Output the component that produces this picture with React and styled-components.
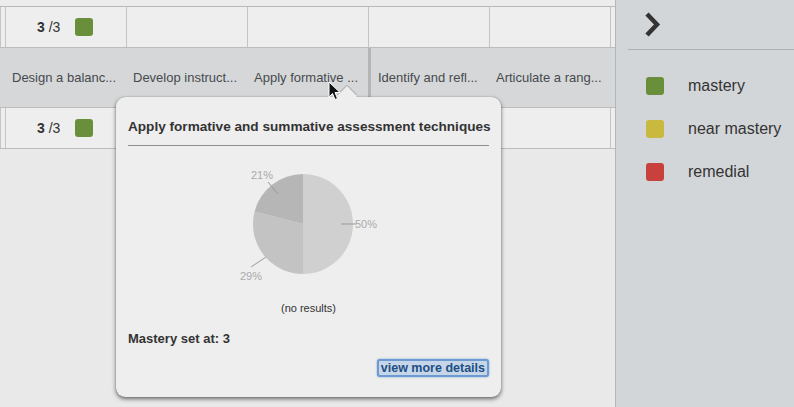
import React from "react";
import styled, { createGlobalStyle } from "styled-components";

const GlobalStyle = createGlobalStyle`
  html, body {
    margin: 0;
    padding: 0;
    background: #e9e9e9;
    font-family: "Liberation Sans", Arial, sans-serif;
  }
`;

const Page = styled.div`
  display: flex;
  width: 794px;
  height: 407px;
  overflow: hidden;
  position: relative;
`;

const Main = styled.div`
  width: 615px;
  flex: none;
  background: #e9e9e9;
`;

const TopStrip = styled.div`
  height: 6px;
  background: #ececec;
  border-bottom: 1px solid #b9b9b9;
`;

const Row = styled.div`
  display: grid;
  grid-template-columns: 5px repeat(5, 121px) 1fr;
  height: ${(p) => p.h}px;
  background: ${(p) => (p.header ? "#d5d7d9" : "#eeeeee")};
  border-bottom: 1px solid #bdbdbd;
`;

const Cell = styled.div`
  display: flex;
  align-items: center;
  justify-content: flex-start;
  gap: 15px;
  border-left: ${(p) => (p.header ? "none" : "1px solid #c4c4c4")};
  ${(p) => p.divider && "border-left: 3px solid #b3b5b7;"}
  padding-left: ${(p) => (p.header ? "7px" : "0")};
  font-size: 13px;
  color: #474a4d;
  white-space: nowrap;
  overflow: hidden;
`;

const Score = styled.span`
  font-size: 14px;
  color: #333;
  padding-left: 31px;
  b {
    font-weight: bold;
  }
`;

const Swatch = styled.span`
  display: inline-block;
  width: 18px;
  height: 18px;
  border-radius: 3px;
  background: ${(p) => p.color};
  flex: none;
`;

const Side = styled.div`
  flex: 1;
  background: #d3d6d9;
  border-left: 1px solid #b4b6b8;
  padding-left: 12px;
`;

const SideHead = styled.div`
  height: 50px;
  border-bottom: 1px solid #aeb0b2;
  display: flex;
  align-items: center;
  padding-left: 16px;
  box-sizing: border-box;
`;

const Legend = styled.div`
  display: flex;
  flex-direction: column;
  gap: 25px;
  padding: 27px 0 0 18px;
`;

const LegendItem = styled.div`
  display: flex;
  align-items: center;
  gap: 24px;
  font-size: 16px;
  color: #333;
`;

const Pop = styled.div`
  position: absolute;
  left: 116px;
  top: 97px;
  width: 385px;
  height: 300px;
  box-sizing: border-box;
  background: #eeeeee;
  border-radius: 9px;
  box-shadow: 0 2px 4px rgba(0, 0, 0, 0.55), 0 0 1px rgba(0, 0, 0, 0.4);
  padding: 22px 12px 0 12px;
  display: flex;
  flex-direction: column;
`;

const Arrow = styled.div`
  position: absolute;
  left: 224px;
  top: -8px;
  width: 14px;
  height: 14px;
  background: #eeeeee;
  transform: rotate(45deg);
  box-shadow: -1px -1px 1px rgba(0, 0, 0, 0.2);
`;

const PopTitle = styled.div`
  font-size: 13.6px;
  font-weight: bold;
  color: #333;
  white-space: nowrap;
  padding-bottom: 11px;
  border-bottom: 1px solid #8f8f8f;
`;

const Chart = styled.div`
  display: flex;
  justify-content: center;
  margin-top: 21px;
  padding-left: 3px;
`;

const NoResults = styled.div`
  text-align: center;
  font-size: 11px;
  color: #333;
  margin-top: 20px;
`;

const MasterySet = styled.div`
  font-size: 13px;
  font-weight: bold;
  color: #333;
  margin-top: 17px;
`;

const Footer = styled.div`
  display: flex;
  justify-content: flex-end;
  margin-top: 13px;
`;

const DetailsBtn = styled.a`
  font-size: 12.5px;
  font-weight: bold;
  color: #1d4f86;
  padding: 0 2px;
  border: 2px solid #6c9bd2;
  border-radius: 3px;
  background: #c6d6e8;
  box-shadow: 0 0 2px #6c9bd2;
  cursor: pointer;
`;

const Cursor = styled.svg`
  position: absolute;
  left: 328px;
  top: 81px;
`;

const labels = [
  "Design a balanc...",
  "Develop instruct...",
  "Apply formative ...",
  "Identify and refl...",
  "Articulate a rang...",
];

function ScoreRow() {
  return (
    <Row h={40}>
      <Cell />
      <Cell>
        <Score>
          <b>3</b> /3
        </Score>
        <Swatch color="#6a8f3a" />
      </Cell>
      <Cell />
      <Cell />
      <Cell />
      <Cell />
      <Cell />
    </Row>
  );
}

function Pie() {
  const cx = 73;
  const cy = 57;
  const r = 50;
  const pt = (deg) => {
    const a = ((deg - 90) * Math.PI) / 180;
    return [cx + r * Math.cos(a), cy + r * Math.sin(a)];
  };
  const [x1, y1] = pt(180);
  const [x2, y2] = pt(284.4);
  const font = "Liberation Sans, Arial, sans-serif";
  return (
    <svg width="160" height="115" viewBox="0 0 160 115">
      <path d={`M${cx},${cy} L${cx},${cy - r} A${r},${r} 0 0 1 ${x1},${y1} Z`} fill="#d0d0d0" />
      <path d={`M${cx},${cy} L${x1},${y1} A${r},${r} 0 0 1 ${x2},${y2} Z`} fill="#c3c3c3" />
      <path d={`M${cx},${cy} L${x2},${y2} A${r},${r} 0 0 1 ${cx},${cy - r} Z`} fill="#b6b6b6" />
      <line x1="111" y1="57" x2="126" y2="57" stroke="#999" strokeWidth="1" />
      <text x="125" y="61" fontSize="11" fill="#aaa" fontFamily={font}>50%</text>
      <line x1="38" y1="15" x2="48" y2="27" stroke="#999" strokeWidth="1" />
      <text x="21" y="12" fontSize="11" fill="#aaa" fontFamily={font}>21%</text>
      <line x1="21" y1="100" x2="36" y2="90" stroke="#999" strokeWidth="1" />
      <text x="10" y="113" fontSize="11" fill="#aaa" fontFamily={font}>29%</text>
    </svg>
  );
}

export default function App() {
  return (
    <>
      <GlobalStyle />
      <Page>
        <Main>
          <TopStrip />
          <ScoreRow />
          <Row h={59} header>
            <Cell header />
            {labels.map((l, i) => (
              <Cell header key={l} divider={i === 3}>
                {l}
              </Cell>
            ))}
            <Cell header />
          </Row>
          <ScoreRow />
        </Main>
        <Side>
          <SideHead>
            <svg width="18" height="26" viewBox="0 0 18 26">
              <path d="M3 2 L13 12.5 L3 23" fill="none" stroke="#333" strokeWidth="4.5" strokeLinejoin="miter" />
            </svg>
          </SideHead>
          <Legend>
            <LegendItem>
              <Swatch color="#6a8f3a" />
              mastery
            </LegendItem>
            <LegendItem>
              <Swatch color="#c9b93e" />
              near mastery
            </LegendItem>
            <LegendItem>
              <Swatch color="#c9413d" />
              remedial
            </LegendItem>
          </Legend>
        </Side>
        <Pop>
          <Arrow />
          <PopTitle>Apply formative and summative assessment techniques</PopTitle>
          <Chart>
            <Pie />
          </Chart>
          <NoResults>(no results)</NoResults>
          <MasterySet>Mastery set at: 3</MasterySet>
          <Footer>
            <DetailsBtn>view more details</DetailsBtn>
          </Footer>
        </Pop>
        <Cursor width="14" height="20" viewBox="0 0 14 20">
          <path d="M1 1 L1 16 L4.5 12.5 L7 18.5 L9.5 17.5 L7 11.5 L12 11.5 Z" fill="#111" stroke="#fff" strokeWidth="1" />
        </Cursor>
      </Page>
    </>
  );
}
